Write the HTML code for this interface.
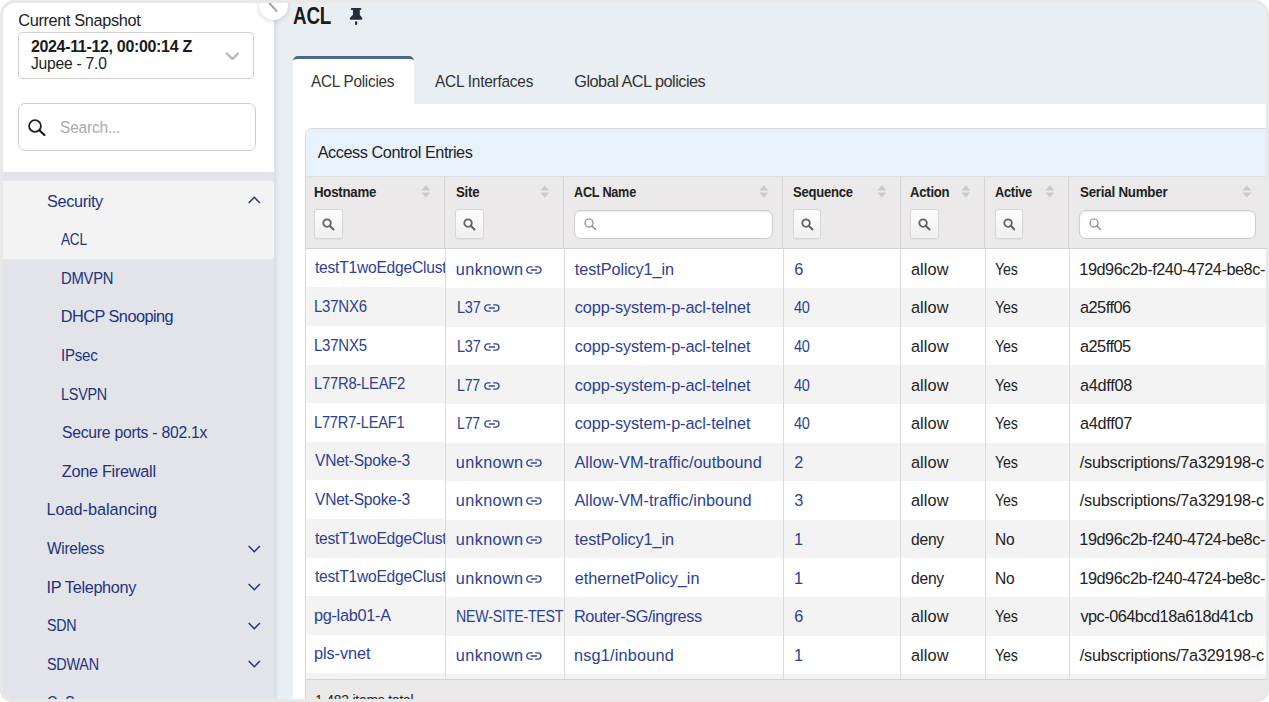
<!DOCTYPE html>
<html lang="en">
<head>
<meta charset="utf-8">
<title>ACL</title>
<style>
*{box-sizing:border-box;margin:0;padding:0}
html,body{width:1269px;height:702px;overflow:hidden;background:#e9eef2}
body{font-family:"Liberation Sans",sans-serif;color:#222;position:relative}
.t{position:absolute;display:block;white-space:nowrap;line-height:20px;transform-origin:0 50%}
.a{position:absolute}
#side{left:0;top:0;width:274px;height:702px;background:#e2e4ea;box-shadow:1px 0 5px rgba(105,120,150,.22)}
#sidetop{left:0;top:0;width:274px;height:172px;background:#fff}
#navon{left:0;top:181px;width:274px;height:77.6px;background:#f3f3f3}
.snap{left:18px;top:32px;width:236px;height:47px;border:1px solid #d0d0d0;border-radius:4px;background:#fff}
.search{left:18px;top:103px;width:238px;height:48px;border:1px solid #cdcdd2;border-radius:7px;background:#fff}
#collapse{left:258.8px;top:-9.5px;width:29px;height:29px;border-radius:50%;background:#fff;box-shadow:0 1px 5px rgba(100,110,130,.30)}
#tabbody{left:293px;top:104px;width:980px;height:600px;background:#fff}
#tabon{left:293px;top:56px;width:120.5px;height:50px;background:#fff;border-top:3px solid #4c6590;border-radius:5px 5px 0 0}
#panel{left:305px;top:128px;width:970px;height:580px;border:1px solid #d6d8dc;border-radius:7px 0 0 0;background:#fff;overflow:hidden}
#phead{left:306px;top:129px;width:970px;height:48px;background:#e8f2fd;border-radius:6px 0 0 0}
#thead{left:306px;top:177px;width:960px;height:71px;background:#ebe9e9}
#theadb{left:306px;top:248px;width:960px;height:1px;background:#d2d2d2}
#theadt{left:306px;top:176px;width:960px;height:1px;background:#dcdfe3}
.vb{top:177px;width:1px;height:71px;background:#d3d3d3}
.vb2{top:249px;width:1px;height:430px;background:#dadada}
.z{position:absolute;left:0;width:100%;height:38.6px;background:#f3f3f3}
.clip{position:absolute;overflow:hidden}
.sbtn{width:28.5px;height:29.2px;top:209.4px;border:1px solid #d6d6d6;border-radius:3px;background:linear-gradient(#fdfdfd,#f0f0f0);box-shadow:0 1px 1px rgba(0,0,0,.04)}
.sinp{height:29px;top:209.5px;border:1px solid #cdcdcd;border-radius:7px;background:#fff;box-shadow:inset 0 1px 1px rgba(0,0,0,.08)}
#foot{left:306px;top:679px;width:960px;height:23px;background:#ebe9e9;border-top:1px solid #d4d4d4}
#frame{left:0;top:0;width:1269px;height:702px;border:3px solid #e8e8e8;border-radius:15px 15px 12px 12px;box-shadow:0 0 0 30px #fff}
</style>
</head>
<body>
<div class="a" id="tabbody"></div>
<div class="a" id="tabon"></div>
<h1 class="t" style="left:293.00px;top:5.93px;font-size:23px;color:#1a1a1a;letter-spacing:-0.250px;font-weight:700;transform:scaleX(0.8176)">ACL</h1>
<svg class="a" style="left:349px;top:7px" width="14" height="19" viewBox="0 0 14 19"><path d="M2.8 1 H11.3 a1 1 0 0 1 0 2 H10.8 V7.8 L12.9 10.5 a1.3 1.3 0 0 1 -1 2.3 H2.2 a1.3 1.3 0 0 1 -1 -2.3 L4 7.8 V3 H2.8 a1 1 0 0 1 0 -2 Z" fill="#262c39"/><rect x="6" y="14.2" width="2.2" height="3.7" rx="1" fill="#262c39"/></svg>
<span class="t" style="left:310.80px;top:71.45px;font-size:16.3px;color:#333;letter-spacing:-0.250px;transform:scaleX(0.9384)">ACL Policies</span>
<span class="t" style="left:434.60px;top:71.45px;font-size:16.3px;color:#333;letter-spacing:-0.250px;transform:scaleX(0.9473)">ACL Interfaces</span>
<span class="t" style="left:574.30px;top:71.45px;font-size:16.3px;color:#333;letter-spacing:-0.508px">Global ACL policies</span>
<div class="a" id="panel"></div>
<div class="a" id="phead"></div>
<span class="t" style="left:317.70px;top:141.95px;font-size:16.3px;color:#222;letter-spacing:-0.454px">Access Control Entries</span>
<div class="a" id="theadt"></div><div class="a" id="thead"></div><div class="a" id="theadb"></div>
<div class="a vb" style="left:444px"></div>
<div class="a vb" style="left:563px"></div>
<div class="a vb" style="left:782px"></div>
<div class="a vb" style="left:900px"></div>
<div class="a vb" style="left:984px"></div>
<div class="a vb" style="left:1068px"></div>
<span class="t" style="left:314.40px;top:182.28px;font-size:14.2px;color:#222;letter-spacing:-0.250px;font-weight:700;transform:scaleX(0.9336)">Hostname</span>
<span class="t" style="left:455.80px;top:182.28px;font-size:14.2px;color:#222;letter-spacing:-0.250px;font-weight:700;transform:scaleX(0.9338)">Site</span>
<span class="t" style="left:573.90px;top:182.28px;font-size:14.2px;color:#222;letter-spacing:-0.250px;font-weight:700;transform:scaleX(0.8916)">ACL Name</span>
<span class="t" style="left:793.20px;top:182.28px;font-size:14.2px;color:#222;letter-spacing:-0.250px;font-weight:700;transform:scaleX(0.9177)">Sequence</span>
<span class="t" style="left:910.10px;top:182.28px;font-size:14.2px;color:#222;letter-spacing:-0.250px;font-weight:700;transform:scaleX(0.9238)">Action</span>
<span class="t" style="left:994.60px;top:182.28px;font-size:14.2px;color:#222;letter-spacing:-0.250px;font-weight:700;transform:scaleX(0.9000)">Active</span>
<span class="t" style="left:1079.50px;top:182.28px;font-size:14.2px;color:#222;letter-spacing:-0.250px;font-weight:700;transform:scaleX(0.9405)">Serial Number</span>
<svg class="a" style="left:420.5px;top:185.3px" width="9.6" height="13" viewBox="0 0 9.6 13"><path d="M4.8 0.3 L9.4 5.6 H0.2 Z M4.8 12.7 L9.4 7.4 H0.2 Z" fill="#cbcbcb"/></svg>
<svg class="a" style="left:539.5px;top:185.3px" width="9.6" height="13" viewBox="0 0 9.6 13"><path d="M4.8 0.3 L9.4 5.6 H0.2 Z M4.8 12.7 L9.4 7.4 H0.2 Z" fill="#cbcbcb"/></svg>
<svg class="a" style="left:758.5px;top:185.3px" width="9.6" height="13" viewBox="0 0 9.6 13"><path d="M4.8 0.3 L9.4 5.6 H0.2 Z M4.8 12.7 L9.4 7.4 H0.2 Z" fill="#cbcbcb"/></svg>
<svg class="a" style="left:876.5px;top:185.3px" width="9.6" height="13" viewBox="0 0 9.6 13"><path d="M4.8 0.3 L9.4 5.6 H0.2 Z M4.8 12.7 L9.4 7.4 H0.2 Z" fill="#cbcbcb"/></svg>
<svg class="a" style="left:960.5px;top:185.3px" width="9.6" height="13" viewBox="0 0 9.6 13"><path d="M4.8 0.3 L9.4 5.6 H0.2 Z M4.8 12.7 L9.4 7.4 H0.2 Z" fill="#cbcbcb"/></svg>
<svg class="a" style="left:1044.5px;top:185.3px" width="9.6" height="13" viewBox="0 0 9.6 13"><path d="M4.8 0.3 L9.4 5.6 H0.2 Z M4.8 12.7 L9.4 7.4 H0.2 Z" fill="#cbcbcb"/></svg>
<svg class="a" style="left:1242.0px;top:185.3px" width="9.6" height="13" viewBox="0 0 9.6 13"><path d="M4.8 0.3 L9.4 5.6 H0.2 Z M4.8 12.7 L9.4 7.4 H0.2 Z" fill="#cbcbcb"/></svg>
<div class="a sbtn" style="left:314.4px"></div><svg class="a" style="left:322.3px;top:217.9px" width="12.9" height="12.9" viewBox="0 0 13 13"><circle cx="5.1" cy="5.1" r="3.8" fill="none" stroke="#636363" stroke-width="1.8"/><path d="M8 8 L11.6 11.6" stroke="#636363" stroke-width="2.1" stroke-linecap="round"/></svg>
<div class="a sbtn" style="left:455.3px"></div><svg class="a" style="left:463.2px;top:217.9px" width="12.9" height="12.9" viewBox="0 0 13 13"><circle cx="5.1" cy="5.1" r="3.8" fill="none" stroke="#636363" stroke-width="1.8"/><path d="M8 8 L11.6 11.6" stroke="#636363" stroke-width="2.1" stroke-linecap="round"/></svg>
<div class="a sbtn" style="left:792.8px"></div><svg class="a" style="left:800.7px;top:217.9px" width="12.9" height="12.9" viewBox="0 0 13 13"><circle cx="5.1" cy="5.1" r="3.8" fill="none" stroke="#636363" stroke-width="1.8"/><path d="M8 8 L11.6 11.6" stroke="#636363" stroke-width="2.1" stroke-linecap="round"/></svg>
<div class="a sbtn" style="left:910.0px"></div><svg class="a" style="left:917.9px;top:217.9px" width="12.9" height="12.9" viewBox="0 0 13 13"><circle cx="5.1" cy="5.1" r="3.8" fill="none" stroke="#636363" stroke-width="1.8"/><path d="M8 8 L11.6 11.6" stroke="#636363" stroke-width="2.1" stroke-linecap="round"/></svg>
<div class="a sbtn" style="left:994.6px"></div><svg class="a" style="left:1002.5px;top:217.9px" width="12.9" height="12.9" viewBox="0 0 13 13"><circle cx="5.1" cy="5.1" r="3.8" fill="none" stroke="#636363" stroke-width="1.8"/><path d="M8 8 L11.6 11.6" stroke="#636363" stroke-width="2.1" stroke-linecap="round"/></svg>
<div class="a sinp" style="left:573.9px;width:199.3px"></div><svg class="a" style="left:584.1px;top:217.6px" width="12.6" height="12.6" viewBox="0 0 14 14"><circle cx="5.6" cy="5.6" r="4.5" fill="none" stroke="#808080" stroke-width="1.25"/><path d="M8.9 8.9 L13 13" stroke="#808080" stroke-width="1.4" stroke-linecap="round"/></svg>
<div class="a sinp" style="left:1078.8px;width:176.8px"></div><svg class="a" style="left:1089.0px;top:217.6px" width="12.6" height="12.6" viewBox="0 0 14 14"><circle cx="5.6" cy="5.6" r="4.5" fill="none" stroke="#808080" stroke-width="1.25"/><path d="M8.9 8.9 L13 13" stroke="#808080" stroke-width="1.4" stroke-linecap="round"/></svg>
<div class="clip" style="left:306px;top:249px;width:139px;height:430px;background:#fff"><div class="z" style="top:38.4px"></div><div class="z" style="top:115.6px"></div><div class="z" style="top:192.8px"></div><div class="z" style="top:270.0px"></div><div class="z" style="top:347.2px"></div><div class="z" style="top:424.4px"></div></div>
<div class="clip" style="left:446px;top:249px;width:820px;height:430px;background:#fff"><div class="z" style="top:39.2px"></div><div class="z" style="top:116.4px"></div><div class="z" style="top:193.6px"></div><div class="z" style="top:270.8px"></div><div class="z" style="top:348.0px"></div><div class="z" style="top:425.2px"></div></div>
<div class="a vb2" style="left:445px"></div>
<div class="a vb2" style="left:564px"></div>
<div class="a vb2" style="left:783px"></div>
<div class="a vb2" style="left:900px"></div>
<div class="a vb2" style="left:985px"></div>
<div class="a vb2" style="left:1069px"></div>
<div class="clip" style="left:306px;top:249px;width:139px;height:430px"><span class="t" style="left:9.00px;top:8.45px;font-size:16.3px;color:#2d3f93;letter-spacing:-0.250px;transform:scaleX(0.9589)">testT1woEdgeCluster</span><span class="t" style="left:8.08px;top:47.05px;font-size:16.3px;color:#2d3f93;letter-spacing:-0.250px;transform:scaleX(0.9216)">L37NX6</span><span class="t" style="left:8.08px;top:85.65px;font-size:16.3px;color:#2d3f93;letter-spacing:-0.250px;transform:scaleX(0.9216)">L37NX5</span><span class="t" style="left:8.09px;top:124.25px;font-size:16.3px;color:#2d3f93;letter-spacing:-0.250px;transform:scaleX(0.9065)">L77R8-LEAF2</span><span class="t" style="left:8.10px;top:162.85px;font-size:16.3px;color:#2d3f93;letter-spacing:-0.250px;transform:scaleX(0.9004)">L77R7-LEAF1</span><span class="t" style="left:8.80px;top:201.45px;font-size:16.3px;color:#2d3f93;letter-spacing:-0.250px;transform:scaleX(0.9572)">VNet-Spoke-3</span><span class="t" style="left:8.80px;top:240.05px;font-size:16.3px;color:#2d3f93;letter-spacing:-0.250px;transform:scaleX(0.9572)">VNet-Spoke-3</span><span class="t" style="left:9.00px;top:278.65px;font-size:16.3px;color:#2d3f93;letter-spacing:-0.250px;transform:scaleX(0.9589)">testT1woEdgeCluster</span><span class="t" style="left:9.00px;top:317.25px;font-size:16.3px;color:#2d3f93;letter-spacing:-0.250px;transform:scaleX(0.9589)">testT1woEdgeCluster</span><span class="t" style="left:7.90px;top:355.85px;font-size:16.3px;color:#2d3f93;letter-spacing:-0.277px">pg-lab01-A</span><span class="t" style="left:8.00px;top:394.45px;font-size:16.3px;color:#2d3f93;letter-spacing:-0.069px">pls-vnet</span></div>
<div class="clip" style="left:446px;top:249px;width:118px;height:430px"><span class="t" style="left:9.80px;top:9.75px;font-size:16.3px;color:#2d3f93;letter-spacing:0.364px">unknown</span><svg class="a" style="left:80.4px;top:16.8px" width="15.8" height="8" viewBox="0 0 16 8"><path d="M6.7 0.8 H4 A3.2 3.2 0 0 0 4 7.2 H6.7 M9.3 0.8 H12 A3.2 3.2 0 0 1 12 7.2 H9.3 M4.9 4 H11.1" fill="none" stroke="#3445a0" stroke-width="1.4"/></svg><span class="t" style="left:10.51px;top:48.35px;font-size:16.3px;color:#2d3f93;letter-spacing:-0.250px;transform:scaleX(0.8903)">L37</span><svg class="a" style="left:38.4px;top:55.4px" width="15.8" height="8" viewBox="0 0 16 8"><path d="M6.7 0.8 H4 A3.2 3.2 0 0 0 4 7.2 H6.7 M9.3 0.8 H12 A3.2 3.2 0 0 1 12 7.2 H9.3 M4.9 4 H11.1" fill="none" stroke="#3445a0" stroke-width="1.4"/></svg><span class="t" style="left:10.51px;top:86.95px;font-size:16.3px;color:#2d3f93;letter-spacing:-0.250px;transform:scaleX(0.8903)">L37</span><svg class="a" style="left:38.4px;top:94.0px" width="15.8" height="8" viewBox="0 0 16 8"><path d="M6.7 0.8 H4 A3.2 3.2 0 0 0 4 7.2 H6.7 M9.3 0.8 H12 A3.2 3.2 0 0 1 12 7.2 H9.3 M4.9 4 H11.1" fill="none" stroke="#3445a0" stroke-width="1.4"/></svg><span class="t" style="left:10.53px;top:125.55px;font-size:16.3px;color:#2d3f93;letter-spacing:-0.250px;transform:scaleX(0.8669)">L77</span><svg class="a" style="left:37.8px;top:132.6px" width="15.8" height="8" viewBox="0 0 16 8"><path d="M6.7 0.8 H4 A3.2 3.2 0 0 0 4 7.2 H6.7 M9.3 0.8 H12 A3.2 3.2 0 0 1 12 7.2 H9.3 M4.9 4 H11.1" fill="none" stroke="#3445a0" stroke-width="1.4"/></svg><span class="t" style="left:10.53px;top:164.15px;font-size:16.3px;color:#2d3f93;letter-spacing:-0.250px;transform:scaleX(0.8669)">L77</span><svg class="a" style="left:37.8px;top:171.2px" width="15.8" height="8" viewBox="0 0 16 8"><path d="M6.7 0.8 H4 A3.2 3.2 0 0 0 4 7.2 H6.7 M9.3 0.8 H12 A3.2 3.2 0 0 1 12 7.2 H9.3 M4.9 4 H11.1" fill="none" stroke="#3445a0" stroke-width="1.4"/></svg><span class="t" style="left:9.80px;top:202.75px;font-size:16.3px;color:#2d3f93;letter-spacing:0.364px">unknown</span><svg class="a" style="left:80.4px;top:209.8px" width="15.8" height="8" viewBox="0 0 16 8"><path d="M6.7 0.8 H4 A3.2 3.2 0 0 0 4 7.2 H6.7 M9.3 0.8 H12 A3.2 3.2 0 0 1 12 7.2 H9.3 M4.9 4 H11.1" fill="none" stroke="#3445a0" stroke-width="1.4"/></svg><span class="t" style="left:9.80px;top:241.35px;font-size:16.3px;color:#2d3f93;letter-spacing:0.364px">unknown</span><svg class="a" style="left:80.4px;top:248.4px" width="15.8" height="8" viewBox="0 0 16 8"><path d="M6.7 0.8 H4 A3.2 3.2 0 0 0 4 7.2 H6.7 M9.3 0.8 H12 A3.2 3.2 0 0 1 12 7.2 H9.3 M4.9 4 H11.1" fill="none" stroke="#3445a0" stroke-width="1.4"/></svg><span class="t" style="left:9.80px;top:279.95px;font-size:16.3px;color:#2d3f93;letter-spacing:0.364px">unknown</span><svg class="a" style="left:80.4px;top:287.0px" width="15.8" height="8" viewBox="0 0 16 8"><path d="M6.7 0.8 H4 A3.2 3.2 0 0 0 4 7.2 H6.7 M9.3 0.8 H12 A3.2 3.2 0 0 1 12 7.2 H9.3 M4.9 4 H11.1" fill="none" stroke="#3445a0" stroke-width="1.4"/></svg><span class="t" style="left:9.80px;top:318.55px;font-size:16.3px;color:#2d3f93;letter-spacing:0.364px">unknown</span><svg class="a" style="left:80.4px;top:325.6px" width="15.8" height="8" viewBox="0 0 16 8"><path d="M6.7 0.8 H4 A3.2 3.2 0 0 0 4 7.2 H6.7 M9.3 0.8 H12 A3.2 3.2 0 0 1 12 7.2 H9.3 M4.9 4 H11.1" fill="none" stroke="#3445a0" stroke-width="1.4"/></svg><span class="t" style="left:10.23px;top:357.15px;font-size:16.3px;color:#2d3f93;letter-spacing:-0.250px;transform:scaleX(0.8718)">NEW-SITE-TEST</span><svg class="a" style="left:122.3px;top:364.2px" width="15.8" height="8" viewBox="0 0 16 8"><path d="M6.7 0.8 H4 A3.2 3.2 0 0 0 4 7.2 H6.7 M9.3 0.8 H12 A3.2 3.2 0 0 1 12 7.2 H9.3 M4.9 4 H11.1" fill="none" stroke="#3445a0" stroke-width="1.4"/></svg><span class="t" style="left:9.80px;top:395.75px;font-size:16.3px;color:#2d3f93;letter-spacing:0.364px">unknown</span><svg class="a" style="left:80.4px;top:402.8px" width="15.8" height="8" viewBox="0 0 16 8"><path d="M6.7 0.8 H4 A3.2 3.2 0 0 0 4 7.2 H6.7 M9.3 0.8 H12 A3.2 3.2 0 0 1 12 7.2 H9.3 M4.9 4 H11.1" fill="none" stroke="#3445a0" stroke-width="1.4"/></svg></div>
<div class="clip" style="left:565px;top:249px;width:218px;height:430px"><span class="t" style="left:9.80px;top:9.75px;font-size:16.3px;color:#2d3f93;letter-spacing:-0.085px">testPolicy1_in</span><span class="t" style="left:9.80px;top:48.35px;font-size:16.3px;color:#2d3f93;letter-spacing:-0.114px">copp-system-p-acl-telnet</span><span class="t" style="left:9.80px;top:86.95px;font-size:16.3px;color:#2d3f93;letter-spacing:-0.114px">copp-system-p-acl-telnet</span><span class="t" style="left:9.80px;top:125.55px;font-size:16.3px;color:#2d3f93;letter-spacing:-0.114px">copp-system-p-acl-telnet</span><span class="t" style="left:9.80px;top:164.15px;font-size:16.3px;color:#2d3f93;letter-spacing:-0.114px">copp-system-p-acl-telnet</span><span class="t" style="left:9.40px;top:202.75px;font-size:16.3px;color:#2d3f93;letter-spacing:0.052px">Allow-VM-traffic/outbound</span><span class="t" style="left:9.40px;top:241.35px;font-size:16.3px;color:#2d3f93;letter-spacing:0.039px">Allow-VM-traffic/inbound</span><span class="t" style="left:9.80px;top:279.95px;font-size:16.3px;color:#2d3f93;letter-spacing:-0.085px">testPolicy1_in</span><span class="t" style="left:9.70px;top:318.55px;font-size:16.3px;color:#2d3f93;letter-spacing:-0.003px">ethernetPolicy_in</span><span class="t" style="left:9.00px;top:357.15px;font-size:16.3px;color:#2d3f93;letter-spacing:-0.424px">Router-SG/ingress</span><span class="t" style="left:9.00px;top:395.75px;font-size:16.3px;color:#2d3f93;letter-spacing:0.189px">nsg1/inbound</span></div>
<div class="clip" style="left:784px;top:249px;width:116px;height:430px"><span class="t" style="left:10.20px;top:9.75px;font-size:16.3px;color:#2d3f93;letter-spacing:0.000px">6</span><span class="t" style="left:10.20px;top:48.35px;font-size:16.3px;color:#2d3f93;letter-spacing:-0.250px;transform:scaleX(0.8930)">40</span><span class="t" style="left:10.20px;top:86.95px;font-size:16.3px;color:#2d3f93;letter-spacing:-0.250px;transform:scaleX(0.8930)">40</span><span class="t" style="left:10.20px;top:125.55px;font-size:16.3px;color:#2d3f93;letter-spacing:-0.250px;transform:scaleX(0.8930)">40</span><span class="t" style="left:10.20px;top:164.15px;font-size:16.3px;color:#2d3f93;letter-spacing:-0.250px;transform:scaleX(0.8930)">40</span><span class="t" style="left:10.20px;top:202.75px;font-size:16.3px;color:#2d3f93;letter-spacing:0.000px">2</span><span class="t" style="left:10.20px;top:241.35px;font-size:16.3px;color:#2d3f93;letter-spacing:0.000px">3</span><span class="t" style="left:9.90px;top:279.95px;font-size:16.3px;color:#2d3f93;letter-spacing:0.000px">1</span><span class="t" style="left:9.90px;top:318.55px;font-size:16.3px;color:#2d3f93;letter-spacing:0.000px">1</span><span class="t" style="left:10.20px;top:357.15px;font-size:16.3px;color:#2d3f93;letter-spacing:0.000px">6</span><span class="t" style="left:9.90px;top:395.75px;font-size:16.3px;color:#2d3f93;letter-spacing:0.000px">1</span></div>
<div class="clip" style="left:901px;top:249px;width:84px;height:430px"><span class="t" style="left:9.90px;top:9.75px;font-size:16.3px;color:#222;letter-spacing:0.139px">allow</span><span class="t" style="left:9.90px;top:48.35px;font-size:16.3px;color:#222;letter-spacing:0.139px">allow</span><span class="t" style="left:9.90px;top:86.95px;font-size:16.3px;color:#222;letter-spacing:0.139px">allow</span><span class="t" style="left:9.90px;top:125.55px;font-size:16.3px;color:#222;letter-spacing:0.139px">allow</span><span class="t" style="left:9.90px;top:164.15px;font-size:16.3px;color:#222;letter-spacing:0.139px">allow</span><span class="t" style="left:9.90px;top:202.75px;font-size:16.3px;color:#222;letter-spacing:0.139px">allow</span><span class="t" style="left:9.90px;top:241.35px;font-size:16.3px;color:#222;letter-spacing:0.139px">allow</span><span class="t" style="left:10.30px;top:279.95px;font-size:16.3px;color:#222;letter-spacing:-0.250px;transform:scaleX(0.9601)">deny</span><span class="t" style="left:10.30px;top:318.55px;font-size:16.3px;color:#222;letter-spacing:-0.250px;transform:scaleX(0.9601)">deny</span><span class="t" style="left:9.90px;top:357.15px;font-size:16.3px;color:#222;letter-spacing:0.139px">allow</span><span class="t" style="left:9.90px;top:395.75px;font-size:16.3px;color:#222;letter-spacing:0.139px">allow</span></div>
<div class="clip" style="left:986px;top:249px;width:83px;height:430px"><span class="t" style="left:9.10px;top:9.75px;font-size:16.3px;color:#222;letter-spacing:-0.250px;transform:scaleX(0.8758)">Yes</span><span class="t" style="left:9.10px;top:48.35px;font-size:16.3px;color:#222;letter-spacing:-0.250px;transform:scaleX(0.8758)">Yes</span><span class="t" style="left:9.10px;top:86.95px;font-size:16.3px;color:#222;letter-spacing:-0.250px;transform:scaleX(0.8758)">Yes</span><span class="t" style="left:9.10px;top:125.55px;font-size:16.3px;color:#222;letter-spacing:-0.250px;transform:scaleX(0.8758)">Yes</span><span class="t" style="left:9.10px;top:164.15px;font-size:16.3px;color:#222;letter-spacing:-0.250px;transform:scaleX(0.8758)">Yes</span><span class="t" style="left:9.10px;top:202.75px;font-size:16.3px;color:#222;letter-spacing:-0.250px;transform:scaleX(0.8758)">Yes</span><span class="t" style="left:9.10px;top:241.35px;font-size:16.3px;color:#222;letter-spacing:-0.250px;transform:scaleX(0.8758)">Yes</span><span class="t" style="left:8.75px;top:279.95px;font-size:16.3px;color:#222;letter-spacing:-0.250px;transform:scaleX(0.9535)">No</span><span class="t" style="left:8.75px;top:318.55px;font-size:16.3px;color:#222;letter-spacing:-0.250px;transform:scaleX(0.9535)">No</span><span class="t" style="left:9.10px;top:357.15px;font-size:16.3px;color:#222;letter-spacing:-0.250px;transform:scaleX(0.8758)">Yes</span><span class="t" style="left:9.10px;top:395.75px;font-size:16.3px;color:#222;letter-spacing:-0.250px;transform:scaleX(0.8758)">Yes</span></div>
<div class="clip" style="left:1070px;top:249px;width:195.5px;height:430px"><span class="t" style="left:9.30px;top:9.75px;font-size:16.3px;color:#222;letter-spacing:-0.452px">19d96c2b-f240-4724-be8c-</span><span class="t" style="left:10.00px;top:48.35px;font-size:16.3px;color:#222;letter-spacing:-0.495px">a25ff06</span><span class="t" style="left:10.00px;top:86.95px;font-size:16.3px;color:#222;letter-spacing:-0.495px">a25ff05</span><span class="t" style="left:10.00px;top:125.55px;font-size:16.3px;color:#222;letter-spacing:-0.295px">a4dff08</span><span class="t" style="left:10.00px;top:164.15px;font-size:16.3px;color:#222;letter-spacing:-0.295px">a4dff07</span><span class="t" style="left:9.70px;top:202.75px;font-size:16.3px;color:#222;letter-spacing:-0.234px">/subscriptions/7a329198-c</span><span class="t" style="left:9.70px;top:241.35px;font-size:16.3px;color:#222;letter-spacing:-0.234px">/subscriptions/7a329198-c</span><span class="t" style="left:9.30px;top:279.95px;font-size:16.3px;color:#222;letter-spacing:-0.452px">19d96c2b-f240-4724-be8c-</span><span class="t" style="left:9.30px;top:318.55px;font-size:16.3px;color:#222;letter-spacing:-0.452px">19d96c2b-f240-4724-be8c-</span><span class="t" style="left:10.40px;top:357.15px;font-size:16.3px;color:#222;letter-spacing:-0.495px">vpc-064bcd18a618d41cb</span><span class="t" style="left:9.70px;top:395.75px;font-size:16.3px;color:#222;letter-spacing:-0.234px">/subscriptions/7a329198-c</span></div>
<div class="a" id="foot"></div>
<span class="t" style="left:315.38px;top:689.93px;font-size:15.2px;color:#222;letter-spacing:-0.250px;transform:scaleX(0.9183)">1,482 items total</span>
<div class="a" id="side"></div><div class="a" id="sidetop"></div><div class="a" id="navon"></div>
<div class="a snap"></div><div class="a search"></div>
<span class="t" style="left:18.30px;top:10.35px;font-size:16.3px;color:#222;letter-spacing:-0.346px">Current Snapshot</span>
<span class="t" style="left:30.90px;top:37.36px;font-size:16.0px;color:#1b1b1b;letter-spacing:-0.326px;font-weight:700">2024-11-12, 00:00:14 Z</span>
<span class="t" style="left:31.00px;top:53.15px;font-size:16.3px;color:#222;letter-spacing:-0.250px;transform:scaleX(0.9606)">Jupee - 7.0</span>
<span class="t" style="left:60.00px;top:118.28px;font-size:16.8px;color:#ababab;letter-spacing:-0.250px;transform:scaleX(0.9272)">Search...</span>
<span class="t" style="left:47.05px;top:190.65px;font-size:16.3px;color:#22337d;letter-spacing:-0.375px">Security</span>
<span class="t" style="left:61.40px;top:229.25px;font-size:16.3px;color:#22337d;letter-spacing:-0.250px;transform:scaleX(0.8355)">ACL</span>
<span class="t" style="left:60.89px;top:267.85px;font-size:16.3px;color:#22337d;letter-spacing:-0.250px;transform:scaleX(0.9083)">DMVPN</span>
<span class="t" style="left:60.80px;top:306.45px;font-size:16.3px;color:#22337d;letter-spacing:-0.526px">DHCP Snooping</span>
<span class="t" style="left:61.07px;top:345.05px;font-size:16.3px;color:#22337d;letter-spacing:-0.250px;transform:scaleX(0.9254)">IPsec</span>
<span class="t" style="left:61.12px;top:383.65px;font-size:16.3px;color:#22337d;letter-spacing:-0.250px;transform:scaleX(0.8828)">LSVPN</span>
<span class="t" style="left:61.80px;top:422.25px;font-size:16.3px;color:#22337d;letter-spacing:-0.250px;transform:scaleX(0.9653)">Secure ports - 802.1x</span>
<span class="t" style="left:61.80px;top:460.85px;font-size:16.3px;color:#22337d;letter-spacing:-0.292px">Zone Firewall</span>
<span class="t" style="left:46.50px;top:499.45px;font-size:16.3px;color:#22337d;letter-spacing:-0.053px">Load-balancing</span>
<span class="t" style="left:47.30px;top:538.05px;font-size:16.3px;color:#22337d;letter-spacing:-0.250px;transform:scaleX(0.9451)">Wireless</span>
<span class="t" style="left:46.50px;top:576.65px;font-size:16.3px;color:#22337d;letter-spacing:-0.327px">IP Telephony</span>
<span class="t" style="left:47.30px;top:615.25px;font-size:16.3px;color:#22337d;letter-spacing:-0.250px;transform:scaleX(0.8757)">SDN</span>
<span class="t" style="left:47.20px;top:653.85px;font-size:16.3px;color:#22337d;letter-spacing:-0.250px;transform:scaleX(0.8826)">SDWAN</span>
<span class="t" style="left:47.20px;top:692.45px;font-size:16.3px;color:#22337d;letter-spacing:-0.250px;transform:scaleX(0.8628)">QoS</span>
<svg class="a" style="left:224.6px;top:51.6px" width="14.8" height="8.4" viewBox="0 0 14.8 8.4"><path d="M1 1 L7.4 7 L13.8 1" fill="none" stroke="#bcbcbc" stroke-width="2.4"/></svg>
<svg class="a" style="left:28px;top:118.5px" width="17.6" height="17.2" viewBox="0 0 17.6 17.2"><circle cx="7" cy="7" r="5.9" fill="none" stroke="#1e1e1e" stroke-width="1.8"/><path d="M11.4 11.2 L16.4 16" stroke="#1e1e1e" stroke-width="2.2" stroke-linecap="round"/></svg>
<svg class="a" style="left:248px;top:196px" width="12.6" height="8" viewBox="0 0 12.6 8"><path d="M0.7 7 L6.3 1.3 L11.9 7" fill="none" stroke="#22337d" stroke-width="1.5"/></svg>
<svg class="a" style="left:248px;top:544.6px" width="12.6" height="8" viewBox="0 0 12.6 8"><path d="M0.7 1 L6.3 6.7 L11.9 1" fill="none" stroke="#22337d" stroke-width="1.5"/></svg>
<svg class="a" style="left:248px;top:583.2px" width="12.6" height="8" viewBox="0 0 12.6 8"><path d="M0.7 1 L6.3 6.7 L11.9 1" fill="none" stroke="#22337d" stroke-width="1.5"/></svg>
<svg class="a" style="left:248px;top:621.8px" width="12.6" height="8" viewBox="0 0 12.6 8"><path d="M0.7 1 L6.3 6.7 L11.9 1" fill="none" stroke="#22337d" stroke-width="1.5"/></svg>
<svg class="a" style="left:248px;top:660.4px" width="12.6" height="8" viewBox="0 0 12.6 8"><path d="M0.7 1 L6.3 6.7 L11.9 1" fill="none" stroke="#22337d" stroke-width="1.5"/></svg>
<svg class="a" style="left:248px;top:699.0px" width="12.6" height="8" viewBox="0 0 12.6 8"><path d="M0.7 1 L6.3 6.7 L11.9 1" fill="none" stroke="#22337d" stroke-width="1.5"/></svg>
<div class="a" id="collapse"></div>
<svg class="a" style="left:266.6px;top:-6.6px" width="12" height="21" viewBox="0 0 12 21"><path d="M10 2 L2.6 10.3 L10 18.6" fill="none" stroke="#a6a6a6" stroke-width="2.1" stroke-linejoin="round"/></svg>
<div class="a" id="frame"></div>
</body>
</html>
